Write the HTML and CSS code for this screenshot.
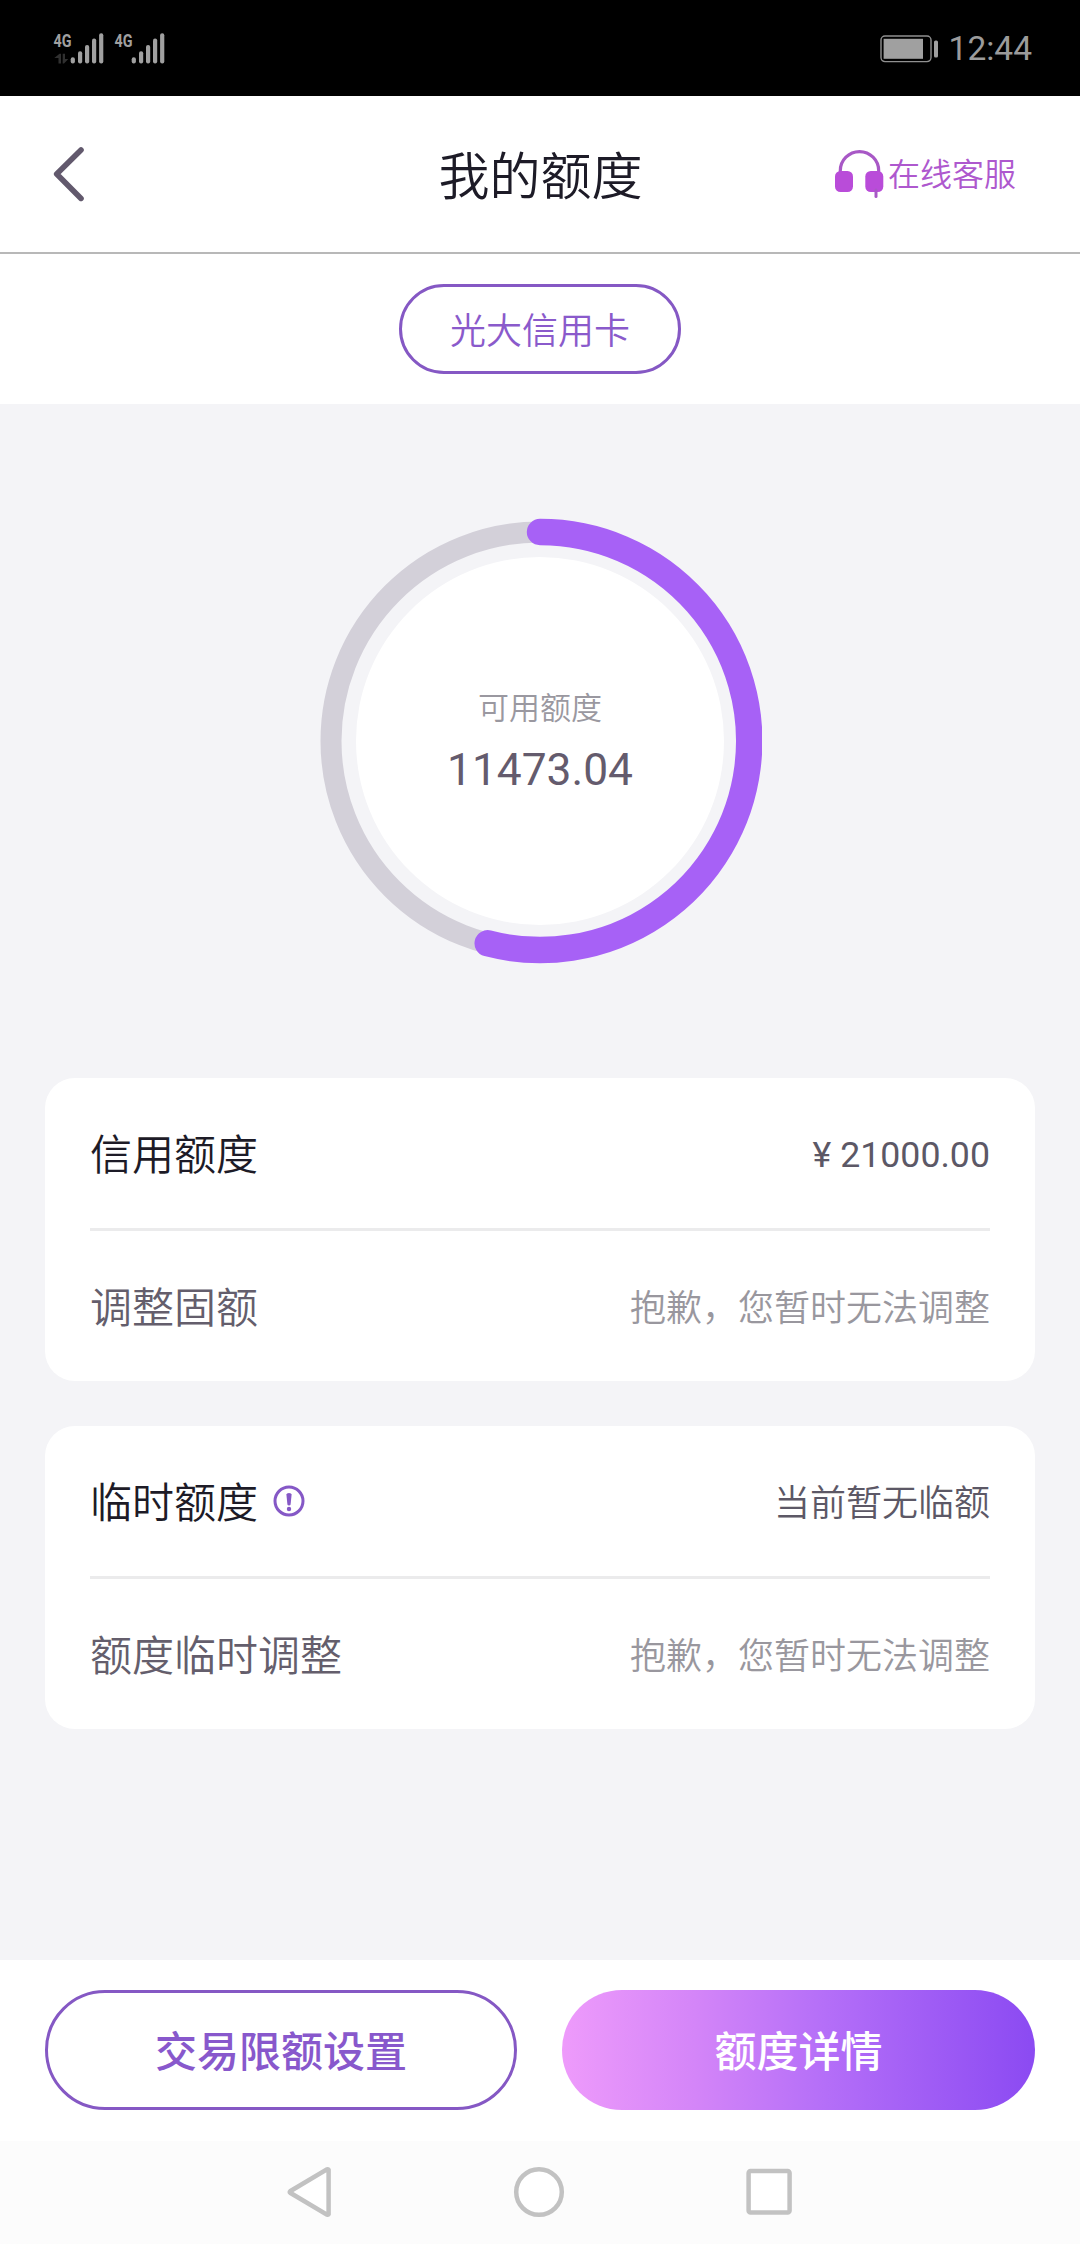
FILE: index.html
```html
<!DOCTYPE html>
<html lang="zh-CN">
<head>
<meta charset="utf-8">
<title>我的额度</title>
<link rel="stylesheet" href="styles.css">
</head>
<body>
<div class="status">
  <svg class="signal" width="112" height="32" viewBox="0 0 112 32">
    <defs>
      <g id="bars">
        <rect x="16.7" y="24.3" width="4.2" height="6.2" rx="2"/>
        <rect x="24" y="18.3" width="4.2" height="12.2" rx="2"/>
        <rect x="31" y="12.1" width="4.2" height="18.4" rx="2"/>
        <rect x="38" y="5.6" width="4.2" height="24.9" rx="2"/>
        <rect x="45.1" y="0.2" width="4.2" height="30.3" rx="2"/>
      </g>
    </defs>
    <g fill="#a0a0a0">
      <text class="net" x="-0.5" y="13.8" textLength="18" lengthAdjust="spacingAndGlyphs">4G</text>
      <use href="#bars"/>
      <text class="net" x="60.5" y="13.8" textLength="18" lengthAdjust="spacingAndGlyphs">4G</text>
      <use href="#bars" x="61"/>
    </g>
    <path fill="#303030" d="M7 30.5H4.5V25H0.3L5.5 20.7H7zM8.7 20.7H11V26H14.3L10 30.5H8.7z"/>
  </svg>
  <div class="status-right">
    <svg width="58" height="28" viewBox="0 0 58 28">
      <rect x="1" y="1" width="50" height="25.6" rx="4" fill="none" stroke="#909090" stroke-width="1.4"/>
      <rect x="3.6" y="3.8" width="39.4" height="20" fill="#a0a0a0"/>
      <rect x="54" y="5.4" width="4" height="17" rx="1.5" fill="#a0a0a0"/>
    </svg>
    <span class="clock">12:44</span>
  </div>
</div>
<header class="header">
  <svg class="back" width="32" height="56" viewBox="0 0 32 56"><path d="M28 4 3.7 28 28 52.4" fill="none" stroke="#62596d" stroke-width="5.6" stroke-linecap="round" stroke-linejoin="round"/></svg>
  <h1 class="title">我的额度</h1>
  <div class="service">
    <svg width="49" height="49" viewBox="0 0 49 49">
      <path d="M5.3 23V20.8a19.2 19.2 0 0 1 38.4 0V23" fill="none" stroke="#a858c6" stroke-width="3.2"/>
      <rect x="0" y="21" width="18" height="21" rx="5.5" fill="#b94cd9"/>
      <rect x="30.3" y="21" width="18" height="21" rx="5.5" fill="#b94cd9"/>
      <path d="M41 40V46.6" stroke="#a858c6" stroke-width="3" stroke-linecap="round"/>
    </svg>
    <span class="service-text">在线客服</span>
  </div>
</header>
<div class="tabs"><div class="tab">光大信用卡</div></div>
<main class="main">
  <div class="gauge">
    <svg class="ring" width="444" height="446" viewBox="-222 -223 444 446">
      <circle r="184" fill="#fff"/>
      <circle r="209" fill="none" stroke="#d3d0d9" stroke-width="21"/>
      <path d="M0 -209A209 209 0 1 1 -52.3 202.3" fill="none" stroke="#a761f6" stroke-width="26.4" stroke-linecap="round"/>
    </svg>
    <div class="gauge-text">
      <span class="gauge-label">可用额度</span>
      <span class="gauge-value">11473.04</span>
    </div>
  </div>
  <section class="card">
    <div class="row"><span class="name">信用额度</span><span class="value amount">¥ 21000.00</span></div>
    <div class="row"><span class="name soft">调整固额</span><span class="value faint">抱歉，您暂时无法调整</span></div>
  </section>
  <section class="card">
    <div class="row">
      <span class="name">临时额度</span>
      <svg class="info" width="32" height="32" viewBox="0 0 32 32">
        <circle cx="16" cy="16" r="14" fill="none" stroke="#8558c6" stroke-width="3"/>
        <path d="M13.4 9.6Q13.4 8 16 8T18.6 9.6L17.6 19.5Q17.4 20.6 16 20.6T14.4 19.5z" fill="#8558c6"/>
        <circle cx="16" cy="24" r="2.2" fill="#8558c6"/>
      </svg>
      <span class="value">当前暂无临额</span>
    </div>
    <div class="row"><span class="name soft">额度临时调整</span><span class="value faint">抱歉，您暂时无法调整</span></div>
  </section>
</main>
<footer class="actions">
  <div class="btn outline">交易限额设置</div>
  <div class="btn solid">额度详情</div>
</footer>
<nav class="nav">
  <svg width="46" height="52" viewBox="0 0 46 52"><path d="M41.6 3.8V48.2Q41.2 49 40 48.6L3.2 26.8Q2.2 26 3.2 25.2L40 3.4Q41.2 3 41.6 3.8z"/></svg>
  <svg width="52" height="52" viewBox="0 0 52 52"><circle cx="26" cy="26" r="22.8"/></svg>
  <svg width="48" height="52" viewBox="0 0 48 52"><rect x="3.6" y="5" width="41" height="41.5" rx="2"/></svg>
</nav>
</body>
</html>
```
FILE: styles.css
```css
* { box-sizing: border-box; }

body {
  margin: 0;
  width: 1080px;
  height: 2244px;
  display: flex;
  flex-direction: column;
  background: #fff;
  font-family: Roboto, "Noto Sans CJK SC", sans-serif;
  font-weight: 350;
  overflow: hidden;
}

svg { display: block; flex: none; }

.status {
  height: 96px;
  flex: none;
  display: flex;
  justify-content: space-between;
  align-items: flex-start;
  padding: 32.5px 48px 0 54px;
  background: #000;
}
.signal { overflow: visible; }
.net { font: 700 19px Roboto, sans-serif; }
.status-right { display: flex; align-items: center; gap: 11px; margin-top: 2px; }
.clock { font-size: 33.5px; line-height: 28px; font-weight: 400; color: #9b9b9b; }

.header {
  height: 158px;
  flex: none;
  display: grid;
  grid-template-columns: 1fr auto 1fr;
  align-items: center;
  padding: 0 64px 0 53px;
  border-bottom: 2px solid #b8b8b8;
}
.back { margin-bottom: 1px; }
.title {
  margin: 0;
  padding: 7px 0 0 12px;
  font-size: 51px;
  line-height: 60px;
  font-weight: 350;
  color: #1d1b27;
}
.service {
  display: flex;
  align-items: center;
  justify-content: flex-end;
  gap: 4px;
  font-size: 32px;
  line-height: 40px;
  color: #ae58ce;
}
.service-text { padding-top: 2px; }

.tabs { height: 150px; flex: none; display: flex; justify-content: center; align-items: center; }
.tab {
  width: 282px;
  height: 90px;
  border: 3px solid #8558c4;
  border-radius: 45px;
  font-size: 36px;
  line-height: 90px;
  text-align: center;
  color: #8a5acb;
}

.main {
  flex: 1;
  display: flex;
  flex-direction: column;
  padding: 114px 45px 0;
  background: #f4f4f7;
}
.gauge { display: grid; place-items: center; margin-bottom: 114px; }
.ring, .gauge-text { grid-area: 1 / 1; }
.gauge-text { display: flex; flex-direction: column; align-items: center; padding-top: 2px; }
.gauge-label { font-size: 31px; line-height: 44px; color: #9a98a0; }
.gauge-value { margin-top: 12px; font-size: 44.3px; line-height: 54px; font-weight: 400; color: #645b6d; }

.card { height: 303px; flex: none; margin-bottom: 45px; padding: 0 45px; border-radius: 30px; background: #fff; }
.row { height: 150px; display: flex; align-items: center; }
.row + .row { height: 153px; border-top: 3px solid #ebebec; }
.name { padding-top: 6px; font-size: 42px; line-height: 56px; color: #1d1b27; }
.soft { color: #645e6c; }
.value { margin-left: auto; padding-top: 6px; font-size: 36px; line-height: 50px; color: #5c5866; }
.amount { padding-top: 4px; font-size: 35.7px; font-weight: 400; }
.faint { color: #99979e; }
.info { margin-left: 14.5px; }

.actions { height: 181px; flex: none; display: flex; gap: 45px; padding: 30px 45px 0; }
.btn { width: 472px; flex: none; height: 120px; border-radius: 60px; font-size: 42px; font-weight: 500; text-align: center; }
.outline { border: 3px solid #8558c4; line-height: 120px; color: #8858cc; }
.solid { width: 473px; background: linear-gradient(90deg, #ee9bfb, #d485f8 28%, #b56ff8 55%, #8b4af2); line-height: 126px; color: #fff; }

.nav { height: 103px; flex: none; display: flex; justify-content: center; align-items: center; gap: 180px; padding: 0 1px 2px 0; background: #fcfcfc; }
.nav svg { fill: #fff; stroke: #c2c2c2; stroke-width: 4.5; }
```
